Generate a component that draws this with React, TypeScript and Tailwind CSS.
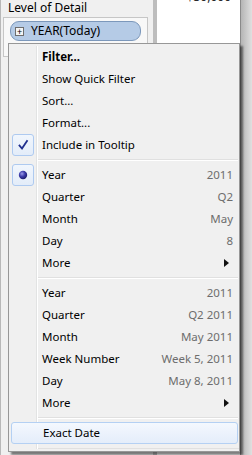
import React from 'react'

type Item =
  | { kind: 'item'; label: string; value?: string; bold?: boolean; mark?: 'check' | 'radio'; arrow?: boolean; hot?: boolean }
  | { kind: 'sep' }

const items: Item[] = [
  { kind: 'item', label: 'Filter...', bold: true },
  { kind: 'item', label: 'Show Quick Filter' },
  { kind: 'item', label: 'Sort...' },
  { kind: 'item', label: 'Format...' },
  { kind: 'item', label: 'Include in Tooltip', mark: 'check' },
  { kind: 'sep' },
  { kind: 'item', label: 'Year', value: '2011', mark: 'radio' },
  { kind: 'item', label: 'Quarter', value: 'Q2' },
  { kind: 'item', label: 'Month', value: 'May' },
  { kind: 'item', label: 'Day', value: '8' },
  { kind: 'item', label: 'More', arrow: true },
  { kind: 'sep' },
  { kind: 'item', label: 'Year', value: '2011' },
  { kind: 'item', label: 'Quarter', value: 'Q2 2011' },
  { kind: 'item', label: 'Month', value: 'May 2011' },
  { kind: 'item', label: 'Week Number', value: 'Week 5, 2011' },
  { kind: 'item', label: 'Day', value: 'May 8, 2011' },
  { kind: 'item', label: 'More', arrow: true },
  { kind: 'sep' },
  { kind: 'item', label: 'Exact Date', hot: true },
]

function Mark({ type }: { type: 'check' | 'radio' }) {
  return (
    <div className="ml-[3px] flex h-[22px] w-[22px] items-center justify-center rounded-[3px] border border-[#aecaf0] bg-gradient-to-b from-[#f1f6fd] to-[#e3ecf9]">
      {type === 'check' ? (
        <svg width="12" height="12" viewBox="0 0 12 12">
          <path d="M2.5 6.5 L5 9.5 L10 2" fill="none" stroke="#1f2e8e" strokeWidth="1.8" strokeLinecap="square" />
        </svg>
      ) : (
        <svg width="10" height="10" viewBox="0 0 10 10">
          <defs>
            <radialGradient id="rb" cx="0.38" cy="0.35" r="0.7">
              <stop offset="0" stopColor="#9a9ae8" />
              <stop offset="0.5" stopColor="#3a3aa8" />
              <stop offset="1" stopColor="#1a1a66" />
            </radialGradient>
          </defs>
          <circle cx="5" cy="5" r="4.2" fill="url(#rb)" />
        </svg>
      )}
    </div>
  )
}

function Row({ item }: { item: Item }) {
  if (item.kind === 'sep') {
    return (
      <div className="flex h-[8px]">
        <div className="w-[28px] shrink-0 border-r border-r-[#e2e3e3]" />
        <div className="w-px bg-white" />
        <div className="flex flex-1 flex-col justify-center pr-[1px]">
          <div className="h-px bg-[#e0e0e0]" />
          <div className="h-px bg-white" />
        </div>
      </div>
    )
  }
  if (item.hot) {
    return (
      <div className="mx-[2px] mr-[1px] flex h-[22px] items-center rounded-[3px] border border-[#b4d0f3] bg-gradient-to-b from-[#f4f8fe] to-[#e4edfa] pl-[31px]">
        <span className="text-black">{item.label}</span>
      </div>
    )
  }
  return (
    <div className="flex h-[22px]">
      <div className="flex w-[28px] shrink-0 items-center border-r border-r-[#e2e3e3]">
        {item.mark && <Mark type={item.mark} />}
      </div>
      <div className="w-px bg-white" />
      <div className="flex flex-1 items-center pl-[4px] pr-[6px]">
        <span className={item.bold ? 'font-bold text-black' : 'text-black'}>{item.label}</span>
        <span className="ml-auto text-[#6d6d6d]">{item.value}</span>
        {item.arrow && (
          <svg width="5" height="8" viewBox="0 0 5 8" className="mr-[4px]">
            <path d="M0 0 L5 4 L0 8 Z" fill="#111" />
          </svg>
        )}
      </div>
    </div>
  )
}

export default function App(): JSX.Element {
  return (
    <main className="relative h-[455px] w-[252px] overflow-hidden bg-white font-['Noto_Sans',sans-serif] text-[11.5px] leading-none">
      <div className="flex h-full">
        <div className="flex w-[153px] flex-col border-l border-l-[#b8b8b8] bg-[#f0f0f0]">
          <div className="h-[17px] pl-[7px] pt-[2px] text-[12px] text-black">Level of Detail</div>
          <div className="ml-[2px] mr-[5px] h-[40px] border border-[#c6c6c6] bg-[#f8f8f8] px-[6px] pt-[3px]">
            <div className="flex h-[20px] items-center gap-[7px] rounded-[9px] border border-[#7c98bb] bg-[#b5cbe6] pl-[4px] text-[12px] text-black">
              <div className="flex h-[9px] w-[9px] items-center justify-center border border-[#6e6e6e] bg-[#f4f4f4] text-[9px] leading-none">+</div>
              <span>YEAR(Today)</span>
            </div>
          </div>
        </div>
        <div className="w-[4px] bg-[#bdbdbd]" />
        <div className="flex w-[84px] flex-col items-end border-r border-r-[#8a8a8a] bg-white pr-[9px]">
          <div className="-mt-[9px] text-[12px] text-[#2a2a2a]">$30,000</div>
        </div>
        <div className="flex-1 bg-gradient-to-r from-[#b5b5b5] to-[#e0e0e0]" />
      </div>

      <div className="absolute left-[8px] top-[43px] w-[232px] border border-[#979797] bg-[#f0f0f0] py-[2px] shadow-[3px_3px_2px_rgba(0,0,0,0.5)]">
        {items.map((it, i) => (
          <Row key={i} item={it} />
        ))}
        <div className="flex h-[5px]">
          <div className="w-[28px] shrink-0 border-r border-r-[#e2e3e3]" />
          <div className="w-px bg-white" />
          <div className="flex flex-1 flex-col justify-end">
            <div className="h-px bg-[#e0e0e0]" />
          </div>
        </div>
      </div>
    </main>
  )
}
